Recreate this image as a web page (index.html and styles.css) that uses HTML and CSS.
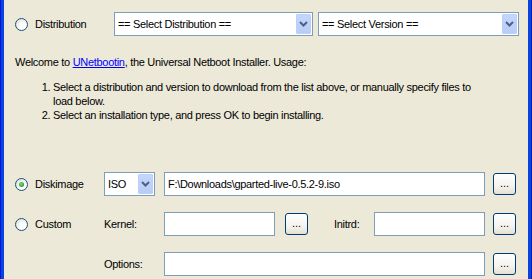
FILE: index.html
```html
<!DOCTYPE html>
<html lang="en">
<head>
  <meta charset="UTF-8">
  <title>UNetbootin</title>
  <link rel="stylesheet" href="styles.css">
</head>
<body>
  <div class="window">
    <div class="row row-dist">
      <label class="radio-label">
        <span class="radio"></span>
        <span>Distribution</span>
      </label>
      <div class="combo combo-dist">
        <span class="combo-text">== Select Distribution ==</span>
        <span class="combo-arrow"><svg width="9" height="6" viewBox="0 0 9 6"><path d="M1 1 L4.5 4.5 L8 1" fill="none" stroke="#4d6185" stroke-width="2"/></svg></span>
      </div>
      <div class="combo combo-ver">
        <span class="combo-text">== Select Version ==</span>
        <span class="combo-arrow"><svg width="9" height="6" viewBox="0 0 9 6"><path d="M1 1 L4.5 4.5 L8 1" fill="none" stroke="#4d6185" stroke-width="2"/></svg></span>
      </div>
    </div>

    <div class="intro">
      <p>Welcome to <a href="#">UNetbootin</a>, the Universal Netboot Installer. Usage:</p>
      <ol>
        <li>Select a distribution and version to download from the list above, or manually specify files to load below.</li>
        <li>Select an installation type, and press OK to begin installing.</li>
      </ol>
    </div>

    <div class="row row-disk">
      <label class="radio-label">
        <span class="radio checked"></span>
        <span>Diskimage</span>
      </label>
      <div class="combo combo-iso">
        <span class="combo-text">ISO</span>
        <span class="combo-arrow"><svg width="9" height="6" viewBox="0 0 9 6"><path d="M1 1 L4.5 4.5 L8 1" fill="none" stroke="#4d6185" stroke-width="2"/></svg></span>
      </div>
      <input class="field field-wide" type="text" value="F:\Downloads\gparted-live-0.5.2-9.iso">
      <button class="browse">...</button>
    </div>

    <div class="row row-custom">
      <label class="radio-label">
        <span class="radio"></span>
        <span>Custom</span>
      </label>
      <span class="field-label">Kernel:</span>
      <input class="field field-kernel" type="text">
      <button class="browse">...</button>
      <span class="field-label label-initrd">Initrd:</span>
      <input class="field field-initrd" type="text">
      <button class="browse">...</button>
    </div>

    <div class="row row-options">
      <span class="field-label">Options:</span>
      <input class="field field-wide" type="text">
      <button class="browse">...</button>
    </div>
  </div>
</body>
</html>
```

FILE: styles.css
```css
html, body {
  margin: 0;
  height: 100%;
}

body {
  font-family: "Liberation Sans", Arial, sans-serif;
  font-size: 11px;
  letter-spacing: -0.3px;
  color: #000;
  background: linear-gradient(to right, #0019cf 0 1px, #0842e4 1px 4px, #ece9d8 4px calc(100% - 4px), #0842e4 calc(100% - 4px) calc(100% - 1px), #001ea0 calc(100% - 1px));
}

.window {
  padding: 12px 0 0 15px;
  box-sizing: border-box;
  height: 100%;
}

.row {
  display: flex;
  align-items: center;
  height: 24px;
}

.radio-label {
  display: flex;
  align-items: center;
  gap: 7px;
  width: 89px;
  flex: none;
}

.radio {
  width: 11px;
  height: 11px;
  border: 1px solid #1c5180;
  border-radius: 50%;
  background: radial-gradient(circle at 65% 65%, #fff 0 30%, #e6e6df 70%, #dcd8c8);
  display: flex;
  align-items: center;
  justify-content: center;
}

.radio.checked::after {
  content: "";
  width: 5px;
  height: 5px;
  border-radius: 50%;
  background: radial-gradient(circle at 40% 40%, #7ee07e, #21a121 70%);
}

.row-dist .radio-label {
  width: 99px;
}

/* combo boxes */
.combo {
  display: flex;
  align-items: center;
  height: 24px;
  box-sizing: border-box;
  border: 1px solid #7f9db9;
  background: #fff;
  padding: 1px;
  flex: none;
}

.combo-text {
  flex: 1;
  padding-left: 2px;
  white-space: nowrap;
  overflow: hidden;
}

.combo-arrow {
  width: 15px;
  height: 20px;
  box-sizing: border-box;
  border: 1px solid #bad0f8;
  border-radius: 1px;
  background: linear-gradient(#c5d6fc, #b8ccf7);
  display: flex;
  align-items: center;
  justify-content: center;
}

.combo-dist {
  width: 199px;
}

.combo-ver {
  width: 201px;
  margin-left: 5px;
}

.combo-iso {
  width: 51px;
}

/* intro text */
.intro {
  line-height: 14px;
  margin-top: 19px;
}

.intro p {
  margin: 0;
}

.intro a {
  color: #0000ff;
}

.intro ol {
  margin: 11px 0 0;
  padding-left: 38px;
  width: 428px;
}

/* lower rows */
.row-disk {
  margin-top: 50px;
}

.row-custom,
.row-options {
  margin-top: 16px;
}

.row-options {
  padding-left: 89px;
}

.field-label {
  width: 60px;
  flex: none;
}

.label-initrd {
  width: 40px;
  margin-left: 26px;
}

.field {
  height: 24px;
  box-sizing: border-box;
  border: 1px solid #7f9db9;
  background: #fff;
  font: inherit;
  letter-spacing: inherit;
  padding: 0 3px;
  margin: 0;
  flex: none;
}

.field-wide {
  width: 321px;
}

.row-disk .field-wide {
  margin-left: 9px;
}

.field-kernel {
  width: 111px;
}

.field-initrd {
  width: 111px;
}

.browse {
  width: 23px;
  height: 22px;
  margin-left: 8px;
  padding: 0 0 2px;
  border: 1px solid #003c74;
  border-radius: 3px;
  background: linear-gradient(#fff, #f4f3ee 60%, #e3e0d5);
  font: inherit;
  letter-spacing: 0;
  color: #000;
  flex: none;
}

.row-custom .browse {
  margin-left: 10px;
}

.row-custom .browse:last-child {
  margin-left: 8px;
}
```
